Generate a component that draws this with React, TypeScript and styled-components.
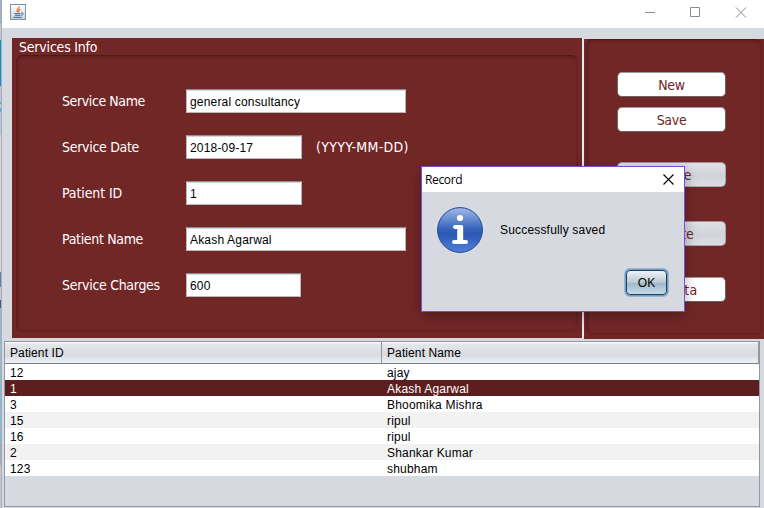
import React from "react";
import styled, { createGlobalStyle } from "styled-components";

const GlobalStyle = createGlobalStyle`
  * { box-sizing: border-box; }
  body { margin: 0; overflow: hidden; }
  button, input { font: inherit; margin: 0; }
`;

const tahoma = `"DejaVu Sans Condensed", "DejaVu Sans", sans-serif`;
const arial = `"Liberation Sans", sans-serif`;

const Screen = styled.div`
  position: relative;
  display: flex;
  width: 764px;
  height: 508px;
  overflow: hidden;
  font: 12px ${arial};
  color: #000;
`;

const Desktop = styled.div`
  width: 2px;
  border-right: 1px solid #a6adb8;
  background: linear-gradient(
    #9fb2cc 0 22px, #35a4dd 22px 23px, #c3c9cf 23px 40px, #0c8fdc 40px 86px,
    #bfc8d2 86px 102px, #4fb2e2 102px 104px, #c5ccd5 104px 108px, #4fb2e2 108px 112px,
    #b9c6d6 112px 135px, #d5dbe2 135px 272px, #667fa5 272px 287px, #c5cbd2 287px 300px,
    #4b5972 300px 308px, #93bccb 308px 385px, #84b9dc 385px 444px, #a6a9b0 444px 465px, #c4c7cd 465px
  );
`;

const Window = styled.main`
  flex: 1;
  display: flex;
  flex-direction: column;
  background: #d6d9e0;
`;

const TitleBar = styled.header`
  display: flex;
  align-items: flex-start;
  justify-content: space-between;
  height: 28px;
  padding: 4px 17px 0 8px;
  background: #fff;
`;

const WindowControls = styled.div`
  display: flex;
  gap: 34px;
  padding-top: 3px;
`;

const Panels = styled.div`
  display: flex;
  align-items: flex-start;
  gap: 2px;
  height: 301px;
  margin: 10px 0 0 10px;
  background: linear-gradient(#e4e6eb, #e4e6eb) 570px 0 / 2px 301px no-repeat;
`;

const ServicesPanel = styled.section`
  width: 570px;
  height: 300px;
  padding: 0 4px;
  background: #722727;
`;

const PanelTitle = styled.h1`
  height: 17px;
  margin: 0 0 0 3px;
  font: 14px/18px ${tahoma};
  letter-spacing: -0.2px;
  color: #fff;
`;

const Etched = styled.div<{ $height: number }>`
  display: flex;
  flex-direction: column;
  height: ${(p) => p.$height}px;
  border: 1px solid #652020;
  border-top-color: #4f191a;
  border-left-color: #5e1d1e;
  border-radius: 6px;
  box-shadow: inset 0 2px 3px #5c1d1e99, inset 1px 0 2px #5c1d1e80;
`;

const Form = styled(Etched)`
  gap: 22px;
  padding: 33px 0 0 45px;
`;

const Field = styled.label`
  display: flex;
  align-items: center;
  height: 24px;
  color: #fff;
`;

const FieldName = styled.span<{ $spacing: number }>`
  width: 124px;
  font: 14px ${tahoma};
  letter-spacing: ${(p) => p.$spacing}px;
  white-space: nowrap;
`;

const TextField = styled.input<{ $width: number }>`
  width: ${(p) => p.$width}px;
  height: 24px;
  padding: 2px 3px 0;
  border: 1px solid #b7b9bc;
  border-top-color: #8d8f94;
  border-radius: 0;
  outline: none;
  background: #fff;
  box-shadow: inset 0 1px 0 #d5d6d8;
  letter-spacing: 0.18px;
  color: #000;
`;

const Hint = styled.span`
  margin-left: 14px;
  font: 14px ${tahoma};
  letter-spacing: 0.3px;
`;

const ActionsPanel = styled.section`
  width: 180px;
  height: 300px;
  margin-top: 1px;
  padding: 0 2px;
  background: #722727;
`;

const Actions = styled(Etched)`
  align-items: center;
  padding: 32px 5px 0 0;
`;

const ActionButton = styled.button<{ $gap: number; $spacing: number; $muted?: boolean }>`
  width: 109px;
  height: 25px;
  margin-bottom: ${(p) => p.$gap}px;
  padding: 1px 0 0;
  border: 1px solid ${(p) => (p.$muted ? "#a5a9b0" : "#6e6165")};
  border-top-color: #a09498;
  border-radius: 5px;
  background: ${(p) => (p.$muted ? "linear-gradient(#dfe1e5, #d0d4da 55%, #dadde2)" : "#fff")};
  font: 14px ${tahoma};
  letter-spacing: ${(p) => p.$spacing}px;
  color: #702526;
`;

const TablePane = styled.section`
  width: 756px;
  height: 166px;
  margin: 2px 0 0 2px;
  border: 1px solid #9297a1;
`;

const Table = styled.table`
  width: 100%;
  border-spacing: 0;
  table-layout: fixed;
`;

const HeadCell = styled.th<{ $width?: number }>`
  width: ${(p) => (p.$width ? p.$width + "px" : "auto")};
  height: 22px;
  padding: 0 5px;
  border-right: 1px solid #9297a1;
  border-bottom: 1px solid #7a7f88;
  background: linear-gradient(#fff 0, #e5e7ea 2px, #dadde1 11px, #d7dade 13px, #eceff4 20px);
  text-align: left;
  font-weight: normal;
  letter-spacing: 0.1px;
`;

const Row = styled.tr<{ $selected?: boolean }>`
  height: 16px;
  background: #fff;
  &:nth-child(even) { background: #f2f2f2; }
  ${(p) => p.$selected && "&&:nth-child(n) { background: #5c1e1f; color: #fff; }"}
`;

const Cell = styled.td`
  height: 16px;
  padding: 2px 5px 0;
  line-height: 14px;
  letter-spacing: 0.2px;
`;

const Dialog = styled.section`
  position: absolute;
  left: 421px;
  top: 166px;
  display: flex;
  flex-direction: column;
  width: 264px;
  height: 146px;
  border: 1px solid #7a4dd6;
  background: #d6d9e0;
  box-shadow: 0 4px 12px rgba(0, 0, 0, 0.3);
`;

const DialogTitle = styled.header`
  display: flex;
  align-items: center;
  justify-content: space-between;
  height: 25px;
  padding: 0 10px 0 3px;
  background: #fff;
  font: 12px "Open Sans", sans-serif;
  letter-spacing: -0.35px;
`;

const DialogBody = styled.div`
  display: flex;
  align-items: center;
  gap: 17px;
  height: 46px;
  margin: 15px 0 0 15px;
  letter-spacing: 0.18px;
`;

const OkButton = styled.button`
  align-self: flex-end;
  width: 41px;
  height: 25px;
  margin: 17px 17px 0 0;
  padding: 0;
  border: 1px solid #273f53;
  border-radius: 4px;
  background: linear-gradient(#edf2f6, #bdcbd6 48%, #a3b8c8 55%, #c5dcec);
  box-shadow: 0 0 0 1px #6f9fc7, 0 0 0 2px #96b7d5;
  font: 12px ${arial};
  color: #000;
`;

const JavaIcon = () => (
  <svg width="16" height="16" viewBox="0 0 16 16" fill="none">
    <defs>
      <linearGradient id="tile" x2="0" y2="1">
        <stop stopColor="#fff" />
        <stop offset="1" stopColor="#c5d4df" />
      </linearGradient>
    </defs>
    <rect x=".5" y=".5" width="15" height="15" fill="url(#tile)" stroke="#7b93a8" />
    <path d="M9.2 2.5C9.8 4.3 5.4 5 7.7 8.2M10.2 5.2C8.2 6.2 8.2 6.8 8.8 8.2" stroke="#ec7b20" strokeWidth="1.3" />
    <path d="M4.3 9.6h6.3M5 11.3h5.1M3.3 13.4h8.4M11 9c3.5-.6 2.6 2-.3 2.4" stroke="#41688d" />
  </svg>
);

const ControlIcon = ({ d }: { d: string }) => (
  <svg width="12" height="12" viewBox="0 0 12 12" fill="none" stroke="#8b8b8b">
    <path d={d} />
  </svg>
);

const InfoIcon = () => (
  <svg width="46" height="46" viewBox="0 0 46 46">
    <defs>
      <linearGradient id="disc" x2="0" y2="1">
        <stop stopColor="#a2bae8" />
        <stop offset=".48" stopColor="#3563bc" />
        <stop offset=".58" stopColor="#2b58b2" />
        <stop offset="1" stopColor="#527fdc" />
      </linearGradient>
    </defs>
    <circle cx="23" cy="23" r="22.4" fill="url(#disc)" stroke="#204792" />
    <circle cx="23" cy="11" r="3.1" fill="#fff" />
    <path
      d="M18 18h6.5q1.7 0 1.7 1.7V33H29q2 0 2 2t-2 2H17q-2 0-2-2t2-2h3.2V22H18q-2 0-2-2t2-2z"
      fill="#fff"
    />
  </svg>
);

const fields = [
  { name: "Service Name", value: "general consultancy", width: 220, spacing: -0.4 },
  { name: "Service Date", value: "2018-09-17", width: 116, spacing: -0.3 },
  { name: "Patient ID", value: "1", width: 116, spacing: -0.1 },
  { name: "Patient Name", value: "Akash Agarwal", width: 220, spacing: -0.33 },
  { name: "Service Charges", value: "600", width: 115, spacing: -0.3 },
];

const actions = [
  { name: "New", gap: 10, spacing: -0.3 },
  { name: "Save", gap: 30, spacing: -0.3 },
  { name: "Delete", gap: 34, spacing: -0.4, muted: true },
  { name: "Update", gap: 31, spacing: -0.3, muted: true },
  { name: "All Data", gap: 0, spacing: 0.3 },
];

const patients = [
  ["12", "ajay"],
  ["1", "Akash Agarwal"],
  ["3", "Bhoomika Mishra"],
  ["15", "ripul"],
  ["16", "ripul"],
  ["2", "Shankar Kumar"],
  ["123", "shubham"],
];

export default function App() {
  return (
    <Screen>
      <GlobalStyle />
      <Desktop />
      <Window>
        <TitleBar>
          <JavaIcon />
          <WindowControls>
            <ControlIcon d="M2 5.5h10" />
            <ControlIcon d="M1.5.5h9v9h-9z" />
            <ControlIcon d="M1 .5l10 10M11 .5L1 10.5" />
          </WindowControls>
        </TitleBar>
        <Panels>
          <ServicesPanel>
            <PanelTitle>Services Info</PanelTitle>
            <Form $height={277}>
              {fields.map((f) => (
                <Field key={f.name}>
                  <FieldName $spacing={f.spacing}>{f.name}</FieldName>
                  <TextField $width={f.width} defaultValue={f.value} />
                  {f.name === "Service Date" && <Hint>(YYYY-MM-DD)</Hint>}
                </Field>
              ))}
            </Form>
          </ServicesPanel>
          <ActionsPanel>
            <Actions $height={296}>
              {actions.map((a) => (
                <ActionButton key={a.name} $gap={a.gap} $spacing={a.spacing} $muted={a.muted}>
                  {a.name}
                </ActionButton>
              ))}
            </Actions>
          </ActionsPanel>
        </Panels>
        <TablePane>
          <Table>
            <thead>
              <tr>
                <HeadCell $width={377}>Patient ID</HeadCell>
                <HeadCell>Patient Name</HeadCell>
              </tr>
            </thead>
            <tbody>
              {patients.map(([id, name]) => (
                <Row key={id} $selected={id === "1"}>
                  <Cell>{id}</Cell>
                  <Cell>{name}</Cell>
                </Row>
              ))}
            </tbody>
          </Table>
        </TablePane>
      </Window>
      <Dialog role="dialog">
        <DialogTitle>
          Record
          <svg width="11" height="11" viewBox="0 0 11 11" stroke="#000" strokeWidth="1.1">
            <path d="M.5.5l10 10M10.5.5l-10 10" />
          </svg>
        </DialogTitle>
        <DialogBody>
          <InfoIcon />
          Successfully saved
        </DialogBody>
        <OkButton>OK</OkButton>
      </Dialog>
    </Screen>
  );
}
